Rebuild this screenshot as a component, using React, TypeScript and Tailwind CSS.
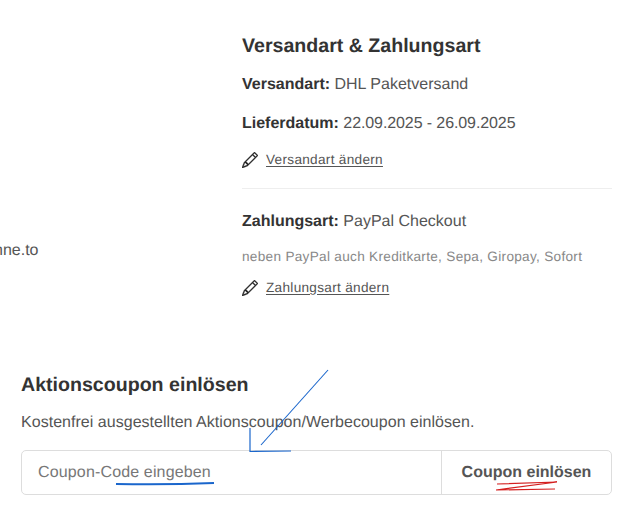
import { BsPencil } from 'react-icons/bs'

const LINK = 'flex items-center gap-2 text-[13.6px] tracking-[0.3px] leading-[16px] text-[#555] underline underline-offset-2'

function EditLink({ label }: { label: string }) {
  return (
    <a className={LINK}>
      <BsPencil className="w-4 h-4 text-[#222]" stroke="currentColor" strokeWidth={0.35} />
      {label}
    </a>
  )
}

export default function App() {
  return (
    <div className="relative w-[638px] h-[519px] overflow-hidden bg-white font-['Liberation_Sans',sans-serif] text-[#555] [text-rendering:geometricPrecision]">
      <div className="flex h-[350px]">
        <div className="w-[242px] pt-[242px] text-[16px] leading-[18px] -ml-[6px] mr-[6px]">nne.to</div>
        <div className="w-[370px] pt-[35px]">
          <h2 className="text-[19.6px] font-bold leading-[22px] text-[#333]">Versandart &amp; Zahlungsart</h2>
          <p className="mt-[18px] text-[16px] leading-[20px]"><b className="text-[#333]">Versandart:</b> DHL Paketversand</p>
          <p className="mt-[19px] text-[16px] leading-[20px]"><b className="text-[#333]">Lieferdatum:</b> <span className="tracking-[-0.1px]">22.09.2025 - 26.09.2025</span></p>
          <div className="mt-[18px]"><EditLink label="Versandart ändern" /></div>
          <div className="mt-[20px] border-t border-[#eee]" />
          <p className="mt-[23px] text-[16px] leading-[20px]"><b className="text-[#333]">Zahlungsart:</b> PayPal Checkout</p>
          <p className="mt-[17px] text-[13.6px] leading-[16px] tracking-[0.3px] text-[#888]">neben PayPal auch Kreditkarte, Sepa, Giropay, Sofort</p>
          <div className="mt-[15px]"><EditLink label="Zahlungsart ändern" /></div>
        </div>
      </div>
      <div className="pl-[21px] w-[612px] pt-[23px]">
        <h2 className="text-[19.6px] font-bold leading-[24px] text-[#333]">Aktionscoupon einlösen</h2>
        <p className="mt-[16px] text-[16px] leading-[20px] tracking-[0.03px]">Kostenfrei ausgestellten Aktionscoupon/Werbecoupon einlösen.</p>
        <div className="mt-[17px] flex h-[45px] border border-[#ddd] rounded-[5px]">
          <div className="flex-1 flex items-center pl-[16px] pt-px text-[16px] tracking-[0.15px] text-[#777]">Coupon-Code eingeben</div>
          <div className="w-[170px] flex items-center justify-center pt-px border-l border-[#ddd] text-[16px] font-bold">Coupon einlösen</div>
        </div>
      </div>
      <svg className="absolute inset-0 pointer-events-none" width="638" height="519" fill="none">
        <path d="M328 370 L261 445" stroke="#1a66cc" strokeWidth="1.1" />
        <path d="M250 428 L250 451.5 L291 451" stroke="#1a66cc" strokeWidth="1.2" />
        <path d="M116 484 Q165 485 214 483" stroke="#1a66cc" strokeWidth="2" />
        <path d="M497 484 L557 482 L496 490 L555 489" stroke="#d42020" strokeWidth="1.2" />
      </svg>
    </div>
  )
}
